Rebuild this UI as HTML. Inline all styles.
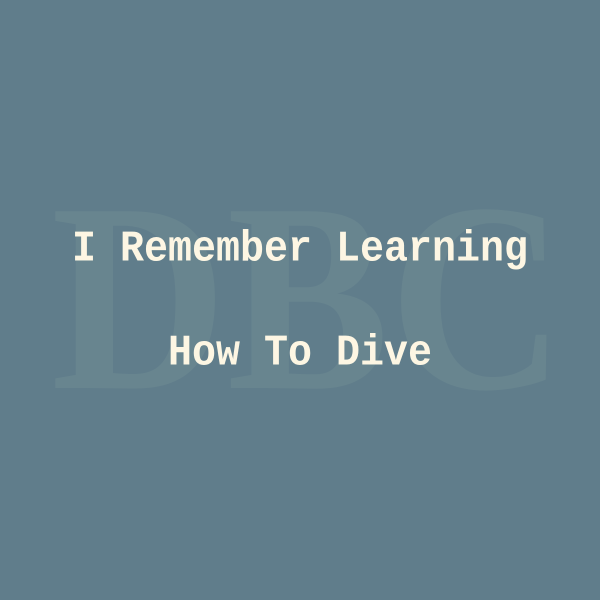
<!DOCTYPE html>
<html><head><style>
html,body{margin:0;padding:0}
body{width:600px;height:600px;background:#607d8b;position:relative;overflow:hidden}
.t{position:absolute;left:0;width:600px;text-align:center;font-family:"Liberation Mono",monospace;font-weight:bold;font-size:40px;color:#fdf6e3;line-height:1;white-space:nowrap;transform:scaleY(1.08)}
</style></head><body>
<svg width="600" height="600" style="position:absolute;left:0;top:0">
<text x="51" y="388" text-anchor="start" font-family="Liberation Serif, serif" font-weight="bold" font-size="270" fill="#68858f" textLength="514" lengthAdjust="spacingAndGlyphs">DBC</text>
</svg>
<div class="t" style="top:231px">I Remember Learning</div>
<div class="t" style="top:335px">How To Dive</div>
</body></html>
